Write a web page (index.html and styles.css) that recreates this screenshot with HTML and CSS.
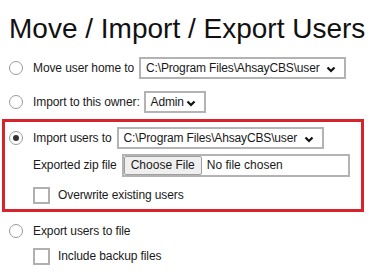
FILE: index.html
```html
<!DOCTYPE html>
<html lang="en">
<head>
<meta charset="UTF-8">
<title>Move / Import / Export Users</title>
<link rel="stylesheet" href="styles.css">
</head>
<body>
<h1>Move / Import / Export Users</h1>

<div class="row">
  <span class="radio"></span>
  <span class="label">Move user home to</span>
  <span class="select wide">C:\Program Files\AhsayCBS\user<svg class="chev" viewBox="0 0 10 7"><path d="M1.5 1.5 L5 5 L8.5 1.5" /></svg></span>
</div>

<div class="row">
  <span class="radio"></span>
  <span class="label">Import to this owner:</span>
  <span class="select owner">Admin<svg class="chev" viewBox="0 0 10 7"><path d="M1.5 1.5 L5 5 L8.5 1.5" /></svg></span>
</div>

<div class="box">
  <div class="row">
    <span class="radio checked"></span>
    <span class="label">Import users to</span>
    <span class="select wide">C:\Program Files\AhsayCBS\user<svg class="chev" viewBox="0 0 10 7"><path d="M1.5 1.5 L5 5 L8.5 1.5" /></svg></span>
  </div>
  <div class="row sub">
    <span class="label">Exported zip file</span>
    <span class="file"><span class="file-btn">Choose File</span><span class="file-name">No file chosen</span></span>
  </div>
  <div class="row sub check-row">
    <span class="check"></span>
    <span class="label">Overwrite existing users</span>
  </div>
</div>

<div class="row after-box">
  <span class="radio"></span>
  <span class="label">Export users to file</span>
</div>
<div class="row sub check-row outer-check">
  <span class="check"></span>
  <span class="label">Include backup files</span>
</div>
</body>
</html>
```

FILE: styles.css
```css
body {
  font-family: "Liberation Sans", Arial, sans-serif;
  font-size: 12px;
  color: #1a1a1a;
  background: white;
  margin: 0;
  padding: 0 0 0 9px;
}
h1 {
  font-size: 28px;
  line-height: 32px;
  font-weight: normal;
  color: #111;
  margin: 0;
  padding: 13px 0 0 0;
}
.row {
  display: flex;
  align-items: center;
  height: 22px;
  margin-top: 12px;
}
.radio {
  width: 14px;
  height: 14px;
  box-sizing: border-box;
  border: 1.5px solid #9a9a9a;
  border-radius: 50%;
  margin-right: 10px;
  display: flex;
  align-items: center;
  justify-content: center;
  flex: none;
}
.radio.checked::after {
  content: "";
  width: 6px;
  height: 6px;
  border-radius: 50%;
  background: #333;
}
.label {
  margin-right: 5px;
  white-space: nowrap;
  letter-spacing: -0.1px;
}
.select {
  height: 22px;
  box-sizing: border-box;
  border: 2px solid #b3b3b3;
  display: flex;
  align-items: center;
  padding-left: 5px;
  position: relative;
  white-space: nowrap;
  overflow: hidden;
  letter-spacing: -0.15px;
}
.select.wide { width: 207px; }
.select.owner { width: 62px; margin-left: -1px; }
.chev {
  position: absolute;
  right: 8px;
  top: 7px;
  width: 10px;
  height: 7px;
}
.chev path {
  fill: none;
  stroke: #111;
  stroke-width: 2.2;
}
.box {
  margin: 6px 0 0 -7px;
  width: 362px;
  box-sizing: border-box;
  border: 3px solid #d8232c;
  padding: 5px 0 3px 4px;
}
.box .row { margin-top: 5px; }
.box .row:first-child { margin-top: 0; }
.row.sub { padding-left: 24px; }
.file {
  width: 228px;
  height: 23px;
  box-sizing: border-box;
  border: 2px solid #b3b3b3;
  display: flex;
  align-items: center;
}
.file-btn {
  height: 19px;
  box-sizing: border-box;
  border: 1px solid #9f9f9f;
  border-radius: 2px;
  background: #efefef;
  padding: 0 6px;
  display: flex;
  align-items: center;
}
.file-name { margin-left: 5px; }
.box .check-row { margin-top: 8px; }
.check {
  width: 17px;
  height: 17px;
  box-sizing: border-box;
  border: 2px solid #b0b0b0;
  margin-right: 8px;
  flex: none;
}
.row.after-box { margin-top: 8px; }
.row.outer-check { margin-top: 3px; }
```
